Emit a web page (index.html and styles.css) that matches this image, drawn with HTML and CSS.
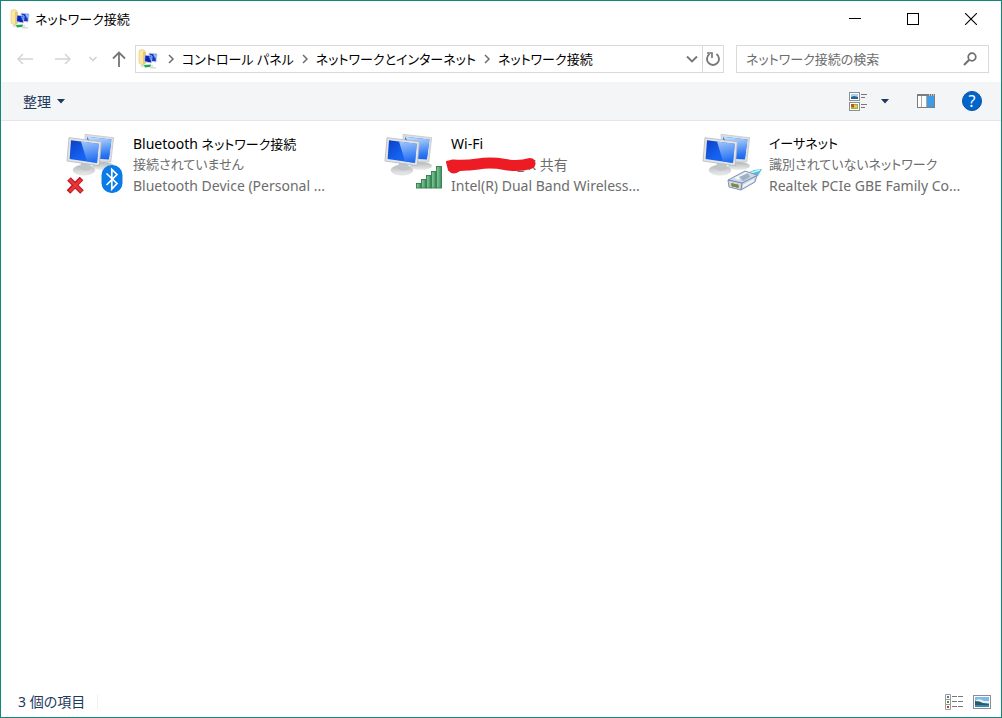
FILE: index.html
```html
<!DOCTYPE html>
<html lang="ja">
<head>
    <meta charset="UTF-8">
    <meta name="viewport" content="width=device-width, initial-scale=1.0">
    <title>ネットワーク接続</title>
    <link rel="stylesheet" href="styles.css">
</head>
<body>
    <!-- shared drawings -->
    <svg class="defs" aria-hidden="true">
        <defs>
            <linearGradient id="screen" x1="0" y1="0" x2="1" y2="1">
                <stop offset="0" stop-color="#0a3fc4"/>
                <stop offset="0.5" stop-color="#1560ee"/>
                <stop offset="1" stop-color="#1c6cf4"/>
            </linearGradient>
            <linearGradient id="shine" x1="0" y1="0" x2="0.2" y2="1">
                <stop offset="0" stop-color="#c9e4ff"/>
                <stop offset="1" stop-color="#2470f2"/>
            </linearGradient>
            <linearGradient id="base" x1="0" y1="0" x2="0" y2="1">
                <stop offset="0" stop-color="#b3b7b9"/>
                <stop offset="1" stop-color="#eceded"/>
            </linearGradient>
            <linearGradient id="bar" x1="0" y1="0" x2="1" y2="0">
                <stop offset="0" stop-color="#8cc9a0"/>
                <stop offset="1" stop-color="#3b9159"/>
            </linearGradient>
        </defs>
        <symbol id="monitors" viewBox="0 0 60 64">
            <ellipse cx="37" cy="34" rx="11" ry="4" fill="url(#base)"/>
            <path d="M19 2.3 47.7 5.7 44.8 30 20 29z" fill="#dcdfe1" stroke="#bfc3c6" stroke-width=".7"/>
            <path d="M21 4.8 45.4 7.6 42.8 27.6 22 26z" fill="#1a66f0"/>
            <path d="M21 4.8 45.4 7.6 43.2 25 34 26z" fill="url(#shine)"/>
            <ellipse cx="18" cy="38" rx="11" ry="5" fill="url(#base)" stroke="#d0d2d4" stroke-width=".6"/>
            <path d="M15 30h9l1 7q-6 3-11 0z" fill="#c2c5c8"/>
            <path d="M3 5.7 35.3 9.7 33.3 33.7 1 29z" fill="#e2e4e5" stroke="#b4b8bb" stroke-width=".8"/>
            <path d="M5 8.2 32.8 11.8 31 31 3.6 27z" fill="url(#screen)"/>
            <path d="M15 9.5 32.8 11.8 31 31 21 29.5z" fill="url(#shine)" opacity=".8"/>
        </symbol>
        <symbol id="folder-net" viewBox="0 0 20 20">
            <path d="M1 1.500 5 .5 7 2v13l-3 1L1 14z" fill="#fbe8a6" stroke="#e2c56c" stroke-width=".6"/>
            <path d="M5 2.500 8 3v11l-3 2z" fill="#ecca70"/>
            <path d="M11 4 19 5 18 13 12 12z" fill="#1638c8" stroke="#c8d2e4" stroke-width=".9"/>
            <path d="M15 5 18.300 5.600 17.500 10z" fill="#8fc0ff"/>
            <path d="M7 6 14 7 13.300 14 6.500 12.600z" fill="#0a22b8" stroke="#c2cde2" stroke-width=".9"/>
            <path d="M10.500 7.200 13.300 7.600 12.800 12z" fill="#5a94f2"/>
            <path d="M3 17h12" stroke="#c3cccb" stroke-width="1.200"/>
            <path d="M6 16 13 15.500l-1 2.500-5 .5z" fill="#25a856"/>
            <path d="M12 18.800h6" stroke="#c5cccc"/>
        </symbol>
        <symbol id="crumb-arrow" viewBox="0 0 8 10">
            <path d="M2 1 6 5 2 9" fill="none" stroke="#6e6e6e" stroke-width="1.500"/>
        </symbol>
    </svg>

    <div class="window">
        <header class="titlebar">
            <svg class="app-icon"><use href="#folder-net"/></svg>
            <h1 class="kana">ネットワーク接続</h1>
            <div class="window-buttons">
                <button type="button" aria-label="最小化"><svg width="12" height="12" viewBox="0 0 12 12"><path d="M0 5.500h12" stroke="#000"/></svg></button>
                <button type="button" aria-label="最大化"><svg width="12" height="12" viewBox="0 0 12 12"><rect x=".5" y=".5" width="11" height="11" fill="none" stroke="#000"/></svg></button>
                <button type="button" aria-label="閉じる"><svg width="12" height="12" viewBox="0 0 12 12"><path d="M0 0 12 12M12 0 0 12" stroke="#000" stroke-width="1.100"/></svg></button>
            </div>
        </header>

        <div class="navbar">
            <div class="nav-buttons">
                <button type="button" aria-label="戻る" disabled><svg width="16" height="12" viewBox="0 0 16 12"><path d="M6 1 1 6l5 5M1 6h15" fill="none" stroke="#d4d4d4" stroke-width="1.500"/></svg></button>
                <button type="button" aria-label="進む" disabled><svg width="16" height="12" viewBox="0 0 16 12"><path d="m10 1 5 5-5 5M15 6H0" fill="none" stroke="#d4d4d4" stroke-width="1.500"/></svg></button>
                <button type="button" aria-label="履歴" disabled><svg width="10" height="12" viewBox="0 0 10 12"><path d="m1.500 4 3.500 3.500L8.500 4" fill="none" stroke="#d0d0d0" stroke-width="1.500"/></svg></button>
                <button type="button" aria-label="上へ"><svg width="14" height="16" viewBox="0 0 14 16"><path d="M1 7.500 7 1.500l6 6M7 2v14" fill="none" stroke="#767676" stroke-width="1.800"/></svg></button>
            </div>
            <div class="address">
                <svg class="address-icon"><use href="#folder-net"/></svg>
                <nav class="crumbs kana">
                    <svg><use href="#crumb-arrow"/></svg>
                    <a href="#">コントロール パネル</a>
                    <svg><use href="#crumb-arrow"/></svg>
                    <a href="#">ネットワークとインターネット</a>
                    <svg><use href="#crumb-arrow"/></svg>
                    <a href="#">ネットワーク接続</a>
                </nav>
                <button type="button" class="drop" aria-label="以前の場所"><svg width="12" height="8" viewBox="0 0 12 8"><path d="m1 1.500 5 5 5-5" fill="none" stroke="#777" stroke-width="1.900"/></svg></button>
                <button type="button" class="refresh" aria-label="更新"><svg width="16" height="16" viewBox="0 0 16 16"><path d="M11.500 3.100A6 6 0 1 1 4.500 3.100" fill="none" stroke="#777" stroke-width="1.900"/><path d="M2 2h5v5" fill="none" stroke="#777" stroke-width="1.700"/></svg></button>
            </div>
            <div class="search">
                <input class="kana" type="text" placeholder="ネットワーク接続の検索" aria-label="ネットワーク接続の検索">
                <svg width="14" height="14" viewBox="0 0 14 14"><circle cx="9" cy="5" r="3.800" fill="none" stroke="#6f6f6f" stroke-width="1.700"/><path d="M6.200 7.800 1 13" stroke="#6f6f6f" stroke-width="2"/></svg>
            </div>
        </div>

        <div class="toolbar">
            <button type="button" class="organize">整理 <svg width="8" height="5" viewBox="0 0 8 5"><path d="M0 0h8L4 4.500z" fill="#1e395b"/></svg></button>
            <div class="tools">
                <button type="button" aria-label="表示の変更"><svg width="18" height="19" viewBox="0 0 18 19">
                    <rect x=".5" y=".5" width="10" height="8" fill="#fff" stroke="#8f8f8f"/>
                    <path d="M2 2h7v5H2z" fill="#a9d2f3"/><path d="M2 5l3-1 4 1v2H2z" fill="#28628c"/>
                    <path d="M12 2.500h6M12 5.500h4" stroke="#777"/>
                    <rect x=".5" y="10.500" width="10" height="8" fill="#fff" stroke="#8f8f8f"/>
                    <path d="M2 12h7v5H2z" fill="#8db747"/><path d="M2 12h3v3H2z" fill="#cf4a2a"/><path d="M5 13h3v3H5z" fill="#f0c33b"/>
                    <path d="M12 12.500h6M12 15.500h4" stroke="#777"/>
                </svg></button>
                <button type="button" class="more" aria-label="その他のオプション"><svg width="8" height="5" viewBox="0 0 8 5"><path d="M0 0h8L4 4.500z" fill="#1e395b"/></svg></button>
                <button type="button" class="preview" aria-label="プレビュー ウィンドウ"><svg width="18" height="14" viewBox="0 0 18 14">
                    <rect x=".5" y=".5" width="17" height="13" fill="#fff" stroke="#7d7d7d"/>
                    <path d="M0 1h18" stroke="#7d7d7d" stroke-width="2"/><path d="M12 1h1m1 0h1m1 0h1" stroke="#fff"/>
                    <path d="M4.500 2v11M9.500 2v11" stroke="#aaa"/><path d="M10 2h7v11h-7z" fill="#3f9be8"/>
                </svg></button>
                <button type="button" class="help" aria-label="ヘルプ">?</button>
            </div>
        </div>

        <main>
            <ul class="connections">
                <li>
                    <svg class="conn-icon" viewBox="0 0 60 64">
                        <use href="#monitors"/>
                        <path d="m3 47 13 13M15.500 46.500 2.500 60" stroke="#b8141b" stroke-width="5"/>
                        <path d="m3.500 47.500 12 12M15 47.500 3.500 59.500" stroke="#e8343a" stroke-width="3"/>
                        <rect x="35.500" y="33" width="21" height="28" rx="10" fill="#0a7be8"/>
                        <path d="m40.500 41.500 10.500 10-5.200 5.500V37.500L51 42.500 40.500 53" fill="none" stroke="#fff" stroke-width="1.700"/>
                    </svg>
                    <div class="conn-text">
                        <h2>Bluetooth <span class="kana">ネットワーク接続</span></h2>
                        <p class="kana">接続されていません</p>
                        <p>Bluetooth Device (Personal ...</p>
                    </div>
                </li>
                <li>
                    <svg class="conn-icon" viewBox="0 0 60 64">
                        <use href="#monitors"/>
                        <g fill="url(#bar)" stroke="#2f7d4c" stroke-width=".9">
                            <rect x="32.500" y="51.500" width="4.500" height="4.500"/>
                            <rect x="37.500" y="47.500" width="4.500" height="8.500"/>
                            <rect x="42.500" y="43.500" width="4.500" height="12.500"/>
                            <rect x="47.500" y="39.500" width="4.500" height="16.500"/>
                            <rect x="52.500" y="34.500" width="5" height="21.500"/>
                        </g>
                    </svg>
                    <div class="conn-text">
                        <h2>Wi-Fi</h2>
                        <p><span class="ssid">_ K<svg viewBox="0 0 92 18"><path d="M8 8Q20 9 33 7T60 7.500T85 6.500" fill="none" stroke="#ed1c24" stroke-width="11" stroke-linecap="round" stroke-linejoin="round"/><path d="M2 5Q6 3 12 6L30 10 15 13Q8 18 4 13Z" fill="#ed1c24" stroke="#ed1c24" stroke-width="2" stroke-linejoin="round"/></svg></span> 共有</p>
                        <p>Intel(R) Dual Band Wireless...</p>
                    </div>
                </li>
                <li>
                    <svg class="conn-icon" viewBox="0 0 60 64">
                        <use href="#monitors"/>
                        <path d="M45 41 52 38 60 37 56 44 49 47z" fill="#55bde2"/>
                        <path d="M48 41 58 38" stroke="#c8f0fb" stroke-width="1.500"/>
                        <path d="M26 48 43 39 55 43 53 50 39 58 27 55z" fill="#cdd8e6" stroke="#8496b0" stroke-width="1"/>
                        <path d="M26 48 40 51 54 44M40 51 39 58" fill="none" stroke="#7088aa"/>
                        <path d="M32 46 44 40 48 42 36 48z" fill="#f2f6fa"/>
                        <path d="M41 53 52 47v2L41 55.500z" fill="#f2f6fa"/>
                        <path d="M37 45 46 41 48 45 41 49z" fill="#9fb0c6"/>
                        <path d="M29 51 37 53v3l-8-2z" fill="#a89a3d"/>
                        <path d="M31 51v4m2-3v3m2-3v4" stroke="#4f5d52" stroke-width=".7"/>
                    </svg>
                    <div class="conn-text">
                        <h2 class="kana">イーサネット</h2>
                        <p class="kana">識別されていないネットワーク</p>
                        <p>Realtek PCIe GBE Family Co...</p>
                    </div>
                </li>
            </ul>
        </main>

        <footer class="statusbar">
            <span class="count">3 個の項目</span>
            <div class="views">
                <button type="button" aria-label="詳細"><svg width="18" height="16" viewBox="0 0 18 16">
                    <path d="M.5.500h5v15h-5zM.5 5.500h5M.5 10.500h5" fill="#fff" stroke="#9b9b9b"/>
                    <path d="M2 2h2v2H2z" fill="#3b7fb5"/><path d="M2 7h2v2H2z" fill="#5e8d3a"/><path d="M2 12h2v2H2z" fill="#b83a2a"/>
                    <path d="M7 2.500h5m1 0h5M7 7.500h5m1 0h5M7 12.500h5m1 0h5" stroke="#777"/>
                </svg></button>
                <button type="button" aria-label="大きいアイコン"><svg width="18" height="14" viewBox="0 0 18 14">
                    <rect x=".5" y=".5" width="17" height="13" fill="#fff" stroke="#8d8d8d"/>
                    <path d="M2 2h14v10H2z" fill="#7db9ec"/><path d="M3 5q4-2 8 1h5v2H2z" fill="#e5f2f8"/>
                    <path d="M2 6q5 0 8 2l6 1v1H2z" fill="#255f63"/><path d="M2 10h14v2H2z" fill="#3d86b4"/>
                </svg></button>
            </div>
        </footer>
    </div>
</body>
</html>
```
FILE: styles.css
```css
* {
    box-sizing: border-box;
}
body {
    margin: 0;
    font-family: "Noto Sans", "Noto Sans CJK JP", sans-serif;
    font-size: 14px;
    line-height: 21px;
    font-feature-settings: "palt";
    color: #000;
    background: #fff;
}
h1, h2, p, ul {
    margin: 0;
    padding: 0;
    font-size: 14px;
    font-weight: 400;
}
button {
    display: flex;
    align-items: center;
    justify-content: center;
    padding: 0;
    border: 0;
    background: none;
    font: inherit;
    color: inherit;
}
.defs {
    position: absolute;
    width: 0;
    height: 0;
}
.window {
    display: flex;
    flex-direction: column;
    min-height: 100vh;
    border: 1px solid #14857a;
}

/* title bar */
.titlebar {
    display: flex;
    align-items: center;
    height: 36px;
    padding: 0 1px 0 9px;
}
.app-icon, .address-icon {
    width: 20px;
    height: 20px;
}
.titlebar h1 {
    margin-left: 5px;
}
.window-buttons {
    display: flex;
    margin-left: auto;
}
.window-buttons button {
    width: 58px;
    height: 36px;
}

/* navigation */
.navbar {
    display: flex;
    align-items: center;
    padding: 8px 12px 9px 16px;
}
.nav-buttons {
    display: flex;
    align-items: center;
    margin-right: 9px;
}
.nav-buttons button {
    margin-right: 14px;
}
.nav-buttons button:first-child {
    margin-right: 22px;
}
.nav-buttons button:nth-child(2) {
    margin-right: 17px;
}
.nav-buttons button:last-child {
    margin-right: 0;
}
.address {
    display: flex;
    align-items: center;
    flex: 1;
    height: 28px;
    padding-left: 2px;
    border: 1px solid #d9d9d9;
}
.address-icon {
    margin-right: 2px;
}
.crumbs {
    display: flex;
    align-items: center;
    flex: 1;
}
.crumbs svg {
    width: 8px;
    height: 10px;
    margin: 0 7px;
}
.crumbs a {
    color: #000;
    text-decoration: none;
}
.drop {
    width: 20px;
}
.refresh {
    width: 21px;
    height: 26px;
    border-left: 1px solid #d9d9d9;
}
.search {
    display: flex;
    align-items: center;
    width: 253px;
    height: 28px;
    margin-left: 12px;
    padding: 0 11px 0 9px;
    border: 1px solid #d9d9d9;
}
.search input {
    flex: 1;
    min-width: 0;
    padding: 0;
    border: 0;
    outline: 0;
    font-family: inherit;
    font-feature-settings: inherit;
}
.search input::placeholder {
    color: #6d6d6d;
}

/* command bar */
.toolbar {
    display: flex;
    align-items: center;
    justify-content: space-between;
    height: 39px;
    padding: 0 19px 0 22px;
    background: #f4f5f7;
    border-bottom: 1px solid #e5e6e8;
    color: #1e395b;
}
.organize {
    gap: 6px;
}
.tools {
    display: flex;
    align-items: center;
}
.more {
    margin-left: 14px;
}
.preview {
    margin: 0 27px 0 28px;
}
.help {
    width: 20px;
    height: 20px;
    border: 1px solid #0a4f9c;
    border-radius: 50%;
    background: #0066cc;
    color: #fff;
    font-size: 16px;
}

/* connections */
main {
    flex: 1;
}
.connections {
    display: grid;
    grid-template-columns: repeat(auto-fill, 258px);
    column-gap: 60px;
    padding: 11px 0 0 65px;
    list-style: none;
}
.connections li {
    display: flex;
    gap: 7px;
}
.conn-icon {
    flex-shrink: 0;
    width: 60px;
    height: 64px;
}
.conn-text {
    padding-top: 1px;
    color: #6d6d6d;
    white-space: nowrap;
}
.conn-text h2 {
    color: #000;
}
.ssid {
    position: relative;
    display: inline-block;
    width: 85px;
    text-align: right;
}
.ssid svg {
    position: absolute;
    left: -6px;
    top: 3px;
    width: 92px;
    height: 18px;
}

/* kana runs wider than the latin text, so set it one size down */
.kana {
    font-size: 13px;
}
h2 .kana {
    line-height: 1;
}

/* status bar */
.statusbar {
    display: flex;
    align-items: center;
    justify-content: space-between;
    height: 30px;
    padding: 0 10px 0 17px;
    color: #1e395b;
}
.count {
    padding-right: 12px;
    border-right: 1px solid #f0f0f0;
    line-height: 14px;
}
.views {
    display: flex;
    align-items: center;
    gap: 10px;
}
```
